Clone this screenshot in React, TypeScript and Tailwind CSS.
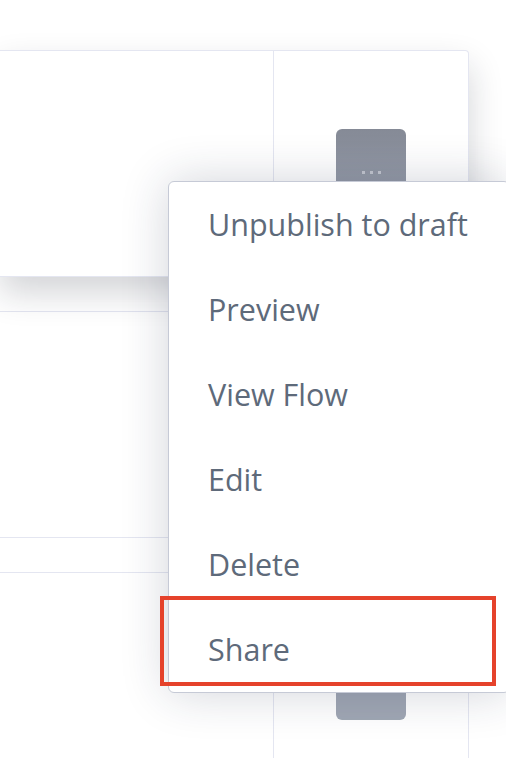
import type { ReactNode } from "react";

const menuItems = ["Unpublish to draft", "Preview", "View Flow", "Edit", "Delete", "Share"];

function Row({ raised, children }: { raised?: boolean; children?: ReactNode }) {
  return (
    <div
      className={
        "grid h-[227px] w-[469px] shrink-0 grid-cols-[274px_1fr] rounded-tr-[4px] border-y border-r border-[#e4e6f1] bg-white " +
        (raised ? "relative z-10 shadow-[0_16px_34px_rgba(20,24,40,0.19)]" : "")
      }
    >
      <div className="border-r border-[#e4e6f1]" />
      <div className="flex items-center justify-center">{children}</div>
    </div>
  );
}

function MoreButton({ light }: { light?: boolean }) {
  return (
    <div
      className={
        "flex h-[69px] w-[70px] items-center justify-center rounded-[6px] " +
        (light ? "bg-[#a0a7b4]" : "bg-gradient-to-b from-[#858a96] to-[#9aa0ad]")
      }
    >
      {!light && (
        <div className="mt-[18px] flex gap-[5px]">
          <span className="h-[3px] w-[3px] bg-[#c4c8d0]" />
          <span className="h-[3px] w-[3px] bg-[#c4c8d0]" />
          <span className="h-[3px] w-[3px] bg-[#c4c8d0]" />
        </div>
      )}
    </div>
  );
}

export default function App() {
  return (
    <div className="relative h-[758px] w-[506px] overflow-hidden bg-white font-['Open_Sans',sans-serif]">
      <div className="flex flex-col gap-[34px] pt-[50px]">
        <Row raised>
          <MoreButton />
        </Row>
        <Row />
        <Row>
          <MoreButton light />
        </Row>
      </div>

      <div className="absolute left-[168px] top-[181px] z-20 w-[342px] rounded-[6px] border border-[#c6cad6] bg-white shadow-[0_0_48px_rgba(30,40,70,0.2)]">
        {menuItems.map((item) => (
          <div key={item} className="flex h-[85px] items-center pl-[39px] text-[30.5px] text-[#5e6a7a]">
            {item}
          </div>
        ))}
      </div>

      <div className="absolute left-[160px] top-[596px] z-30 h-[90px] w-[336px] border-4 border-[#e5422b]" />
    </div>
  );
}
